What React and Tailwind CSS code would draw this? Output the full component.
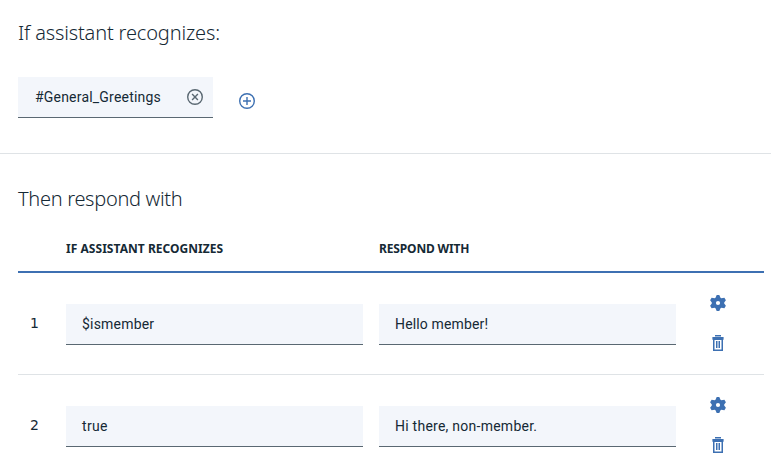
import React from "react";

const rows = [
  { id: 1, condition: "$ismember", conditionSpacing: "tracking-[0.2px]", response: "Hello member!", responseSpacing: "tracking-[0.15px]" },
  { id: 2, condition: "true", conditionSpacing: "tracking-[0.3px]", response: "Hi there, non-member.", responseSpacing: "tracking-[0.25px]" },
];

function CloseIcon() {
  return (
    <svg width="16" height="16" viewBox="0 0 16 16" fill="none" stroke="#5a6872" strokeWidth="1.4">
      <circle cx="8" cy="8" r="7.3" />
      <path d="M5.1 5.1l5.8 5.8M10.9 5.1l-5.8 5.8" />
    </svg>
  );
}

function PlusIcon() {
  return (
    <svg width="16" height="16" viewBox="0 0 16 16" fill="none" stroke="#3d70b2" strokeWidth="1.4">
      <circle cx="8" cy="8" r="7.3" />
      <path d="M8 4v8M4 8h8" />
    </svg>
  );
}

function GearIcon() {
  return (
    <svg width="16" height="16" viewBox="0 0 16 16" fill="#3d70b2">
      <path
        fillRule="evenodd"
        d="M6.700 0h2.600l1.200 2.700.9.500 3-.4L15.900 5.300 14.200 7.500v1l1.700 2.200-1.500 2.500-3-.4-.9.500L9.300 16H6.700l-1.200-2.700-.9-.5-3 .4L.100 10.700 1.800 8.500v-1L.100 5.300l1.500-2.500 3 .4.9-.5zM8 5.900a2.100 2.100 0 1 0 0 4.200 2.100 2.100 0 0 0 0-4.200z"
      />
    </svg>
  );
}

function TrashIcon() {
  return (
    <svg width="12" height="16" viewBox="0 0 12 16" fill="#3d70b2">
      <path d="M3 0h6v1.400H3zM.4 2h11.200v2.700H.4z" />
      <path fillRule="evenodd" d="M1 4h10v12H1zM2.500 5v9.500h7V5z" />
      <path d="M4 6h1.500v7H4zM6.500 6H8v7H6.500z" />
    </svg>
  );
}

function Field({ children, spacing }) {
  return (
    <div className="flex h-[41px] w-[297px] items-center border-b border-[#5a6872] bg-[#f3f6fb] px-4 text-sm text-[#152935]">
      <span className={spacing}>{children}</span>
    </div>
  );
}

export default function App() {
  return (
    <div className="h-[475px] w-[771px] overflow-hidden bg-white font-['Roboto',sans-serif] text-[#152935]">
      <section className="h-[154px] border-b border-[#dfe3e6] pl-[18px] pt-[19px]">
        <h2 className="font-['Noto_Sans'] text-[20px] leading-7 font-light tracking-[-0.15px]">If assistant recognizes:</h2>
        <div className="mt-[30px] flex items-center">
          <div className="flex h-[41px] w-[195px] items-center justify-between border-b border-[#5a6872] bg-[#f3f6fb] pl-[17px] pr-[10px] text-sm">
            <span className="tracking-[0.2px]">#General_Greetings</span>
            <CloseIcon />
          </div>
          <div className="ml-[26px] mt-[6px]"><PlusIcon /></div>
        </div>
      </section>
      <section className="pl-[18px] pr-[7px] pt-[31px]">
        <h2 className="font-['Noto_Sans'] text-[20px] leading-7 font-light tracking-[-0.3px]">Then respond with</h2>
        <div className="mt-[26px] flex h-[34px] border-b-2 border-[#3d70b2] pl-12 font-['Noto_Sans'] text-xs leading-5 font-bold">
          <div className="w-[313px] tracking-[0.04px]">IF ASSISTANT RECOGNIZES</div>
          <div className="tracking-[-0.15px]">RESPOND WITH</div>
        </div>
        {rows.map((row) => (
          <div key={row.id} className="flex h-[102px] items-start border-b border-[#dfe3e6]">
            <div className="mt-[40px] w-12 pl-3 font-['DejaVu_Sans'] text-sm leading-5">{row.id}</div>
            <div className="mt-[31px] flex gap-4">
              <Field spacing={row.conditionSpacing}>{row.condition}</Field>
              <Field spacing={row.responseSpacing}>{row.response}</Field>
            </div>
            <div className="ml-[34px] mt-[22px] flex flex-col items-center gap-6">
              <GearIcon />
              <TrashIcon />
            </div>
          </div>
        ))}
      </section>
    </div>
  );
}
